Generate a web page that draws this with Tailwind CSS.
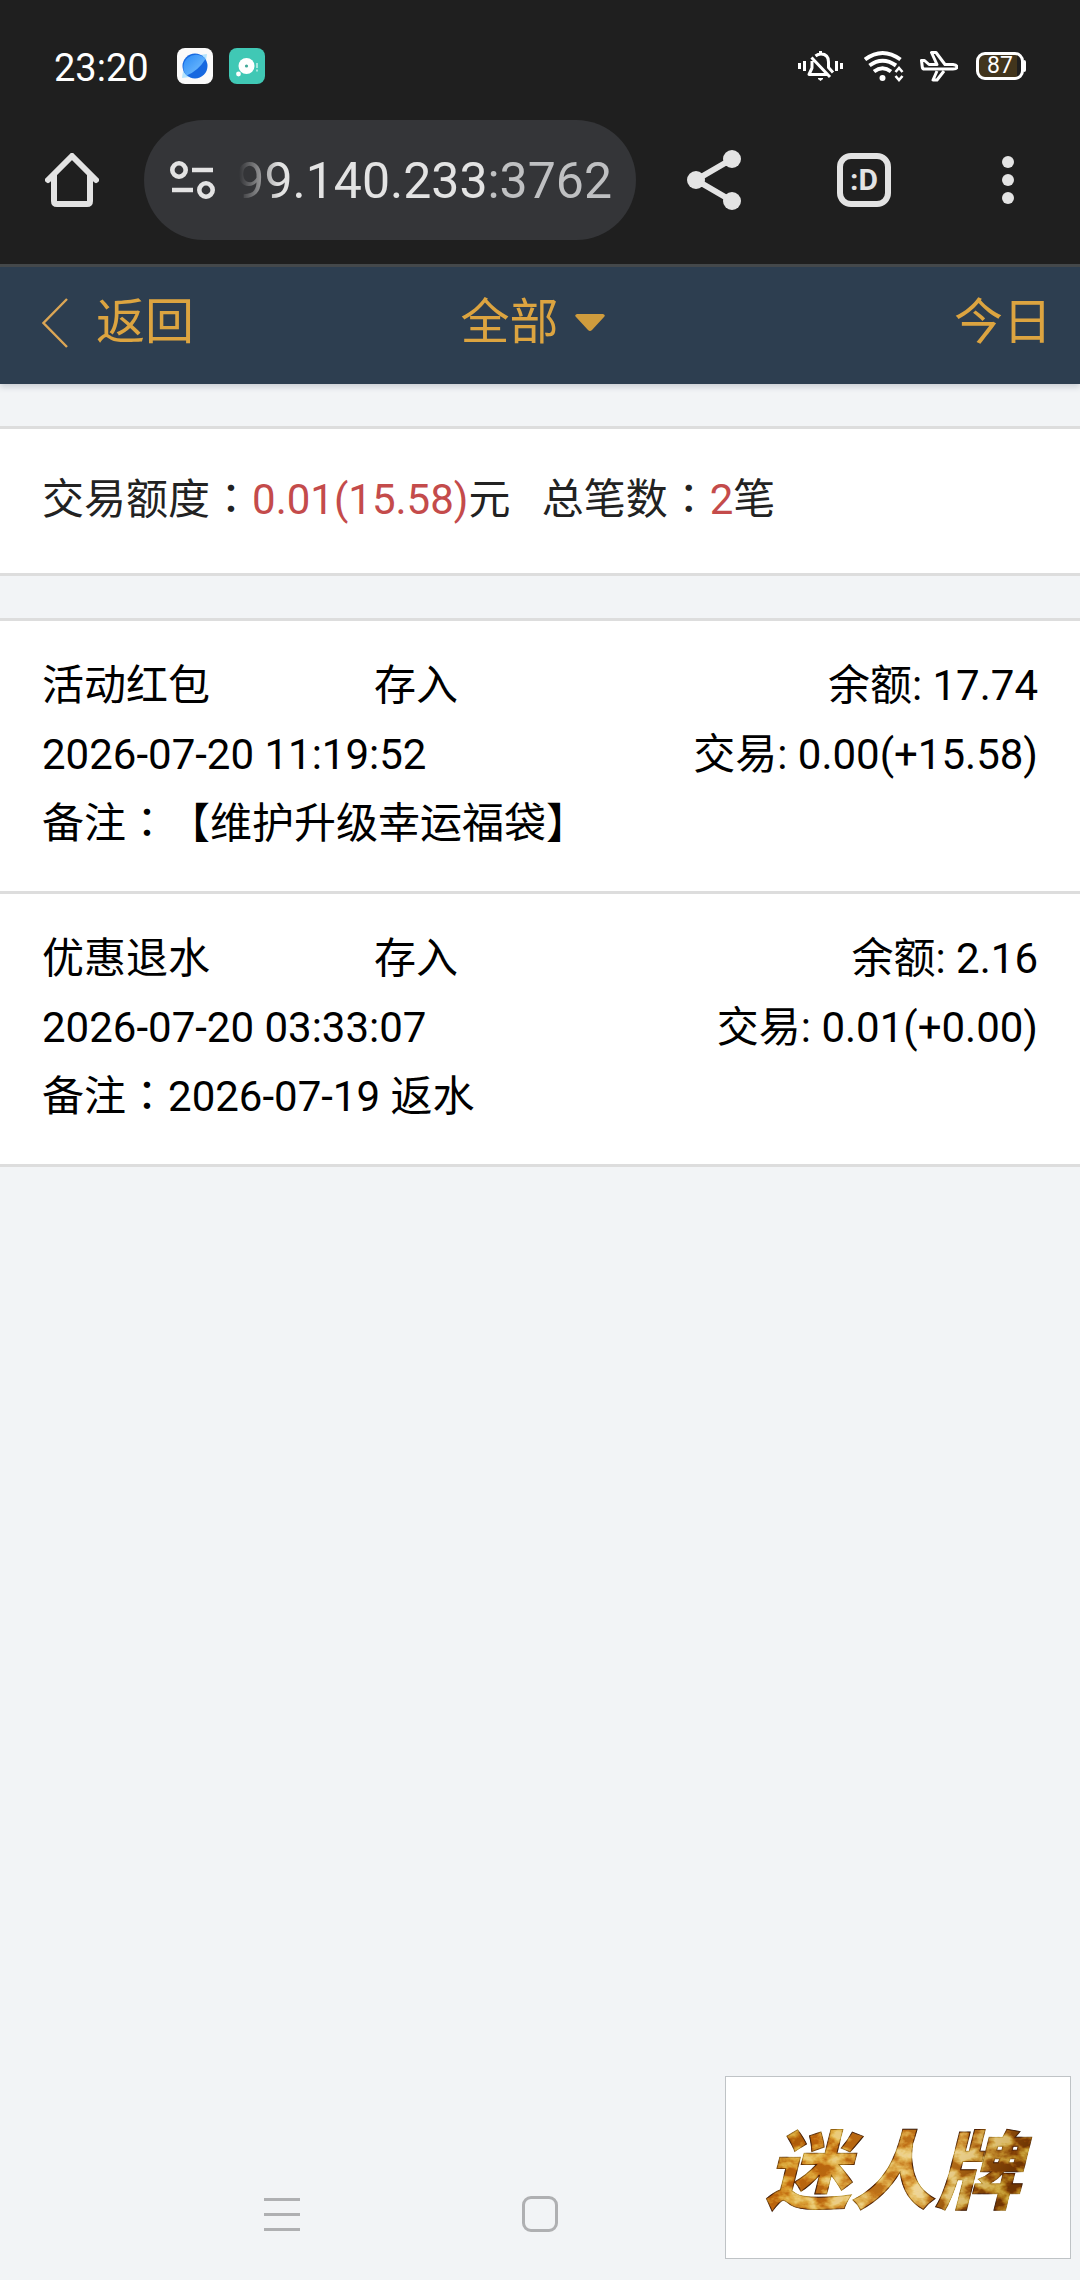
<!DOCTYPE html>
<html lang="zh-CN">
<head>
  <meta charset="UTF-8">
  <meta name="viewport" content="width=device-width, initial-scale=1.0">
  <title>交易记录</title>
  <script src="https://cdn.jsdelivr.net/npm/@tailwindcss/browser@4"></script>
</head>
<body class="flex flex-col min-h-screen bg-[#f2f4f6] text-black text-[42px] leading-[69px] font-['Roboto','Noto_Sans_CJK_SC',sans-serif]">

  <!-- Browser chrome -->
  <div class="bg-[#1f1f1f] text-[#e3e3e3] border-b-3 border-[#45494b]">
    <!-- Status bar -->
    <div class="flex items-center h-[120px] pt-3 px-[54px] text-white">
      <span class="pt-1 text-[38px] leading-[48px] mr-7">23:20</span>
      <svg class="size-9 mr-4" viewBox="0 0 36 36">
        <defs>
          <linearGradient id="planet" x1="0" y1="0" x2="1" y2="1">
            <stop offset="0" stop-color="#2a8af6"/>
            <stop offset="1" stop-color="#7cc4ff"/>
          </linearGradient>
        </defs>
        <rect width="36" height="36" rx="8" fill="#fafafa"/>
        <path d="M23 7l7-1-1 7zM6 23l-1 7 8-1z" fill="#b5e4fd"/>
        <circle cx="18" cy="18" r="12.5" fill="#1668e0"/>
        <path d="M28.5 11A12.5 12.5 0 1 0 9.5 27.5Q21 23 28.5 11z" fill="url(#planet)"/>
      </svg>
      <svg class="size-9" viewBox="0 0 36 36">
        <rect width="36" height="36" rx="8" fill="#40c8b5"/>
        <circle cx="17.5" cy="18" r="8" fill="#fff"/>
        <circle cx="17.5" cy="18" r="1.6" fill="#40a898"/>
        <circle cx="9.5" cy="26" r="2.4" fill="#fff"/>
        <path d="M28 15v5M28 21.5v2" stroke="#c5f0ea" stroke-width="1.5"/>
      </svg>
      <div class="ml-auto flex items-center">
        <svg class="w-[46px] h-8 mr-5" viewBox="0 0 46 32" fill="none" stroke="#fff" stroke-width="3">
          <path d="M1.5 13v6M6.5 11v10M38.5 11v10M43.5 13v6"/>
          <path d="M17.5 6Q20 4 23 4q7.5 0 7.5 8v5.5l4.5 5M14 11v7l-3 6.5h18M13.5 7.5L32 27M22.5 1v3" stroke-linejoin="round"/>
          <path d="M20 28.5h5l-2.5 2z" fill="#fff" stroke-width="1"/>
        </svg>
        <svg class="w-10 h-8 mr-4" viewBox="0 0 40 32" fill="none" stroke="#fff" stroke-width="4">
          <path d="M1 9.5Q18.500-3.500 36.500 9.500M5.500 15.500Q18.500 6 32 15.500M10 21.500Q18.500 15 27 21.500"/>
          <circle cx="18.5" cy="28" r="3" fill="#fff" stroke="none"/>
          <path d="M31.500 22l3.500-4 3.500 4M31.500 26l3.500 4 3.500-4" stroke-width="2.6"/>
        </svg>
        <svg class="w-[38px] h-8 mr-[18px]" viewBox="0 0 38 32" fill="none" stroke="#fff" stroke-width="3" stroke-linejoin="round">
          <path d="M1.500 10.500h3l4.500 4h8L11.500 2.500h4.500L25 14.500h8q4 .5 4 2.500t-4 2H4.500q-2 0-2.200-2z"/>
          <path d="M17 21L13 30h4L24 21"/>
        </svg>
        <span class="flex items-center">
          <span class="flex items-center justify-center w-12 h-7 rounded-[9px] border-3 border-white bg-linear-to-r from-[#42351c] from-90% to-[#1f1f1f] to-90% text-[23px] leading-[22px]">87</span>
          <span class="w-[2px] h-3 rounded-r-sm bg-white"></span>
        </span>
      </div>
    </div>
    <!-- Address bar -->
    <div class="flex items-center pl-[45px] pr-[66px] pb-6 leading-none">
      <button type="button" aria-label="主页" class="mr-[45px]">
        <svg class="size-[54px]" viewBox="0 0 54 54" fill="none" stroke="#e3e3e3" stroke-width="6" stroke-linecap="round" stroke-linejoin="round">
          <path d="M3 27L27 3l24 24M9 22v26q0 3 3 3h30q3 0 3-3V22"/>
        </svg>
      </button>
      <button type="button" aria-label="地址" class="flex-1 min-w-0 flex items-center h-[120px] rounded-full bg-[#343538] pl-[26px] pr-6">
        <svg class="w-[45px] h-10 mr-4 shrink-0" viewBox="0 0 45 40" fill="none" stroke="#e3e3e3" stroke-width="4.6">
          <circle cx="9" cy="10" r="6.7"/>
          <circle cx="36" cy="30" r="6.7"/>
          <path d="M22 10h21M2 30h21"/>
        </svg>
        <span class="flex-1 pt-0.5 text-right whitespace-nowrap text-[50px] leading-[60px] [mask-image:linear-gradient(to_right,transparent_8px,black_48px)]">99.140.233<span class="text-[#bfc0c2]">:3762</span></span>
      </button>
      <button type="button" aria-label="分享" class="ml-[51px]">
        <svg class="w-[54px] h-[60px]" viewBox="0 0 54 60" fill="#e3e3e3">
          <path d="M45 9L9 30l36 21" fill="none" stroke="#e3e3e3" stroke-width="6"/>
          <circle cx="9" cy="30" r="9"/>
          <circle cx="45" cy="9" r="9"/>
          <circle cx="45" cy="51" r="9"/>
        </svg>
      </button>
      <button type="button" aria-label="标签页" class="ml-24 size-[54px] rounded-[14px] border-6 border-[#e3e3e3] text-[30px] leading-[38px] font-bold">:D</button>
      <button type="button" aria-label="更多" class="ml-[111px]">
        <svg class="w-3 h-12" viewBox="0 0 12 48" fill="#e3e3e3">
          <circle cx="6" cy="6" r="6"/>
          <circle cx="6" cy="24" r="6"/>
          <circle cx="6" cy="42" r="6"/>
        </svg>
      </button>
    </div>
  </div>

  <!-- Page header -->
  <header class="grid grid-cols-3 items-center h-[117px] pl-[42px] pr-7 pb-1.5 bg-[#2d3e50] text-[#dca440] text-[49px] leading-[72px] shadow-[0_3px_6px_rgba(45,62,80,0.2)]">
    <a href="#" class="flex items-center gap-7">
      <svg class="w-[26px] h-[50px]" viewBox="0 0 26 50" fill="none" stroke="#dca655" stroke-width="2.4">
        <path d="M25 1L1.5 25 25 49"/>
      </svg>
      返回
    </a>
    <div class="flex items-center justify-center gap-4 pr-7">
      <select aria-label="交易类型" class="appearance-none">
        <option>全部</option>
      </select>
      <svg class="w-[30px] h-[17px]" viewBox="0 0 30 17" fill="#cf9c3d">
        <path d="M2 0h26q3 1 1 3L17 16q-2 2-4 0L1 3Q-1 1 2 0z"/>
      </svg>
    </div>
    <a href="#" class="justify-self-end">今日</a>
  </header>

  <main class="flex-1 pt-[42px] [text-spacing-trim:space-all]">
    <!-- Summary -->
    <p class="px-[42px] pt-9 pb-[39px] mb-[42px] bg-white border-y-3 border-[#ddd] text-[#222]">交易额度<span lang="zh-TW" class="leading-none font-['Noto_Sans_CJK_TC',sans-serif]">：</span><span class="text-[#c44b4b]">0.01(15.58)</span>元&nbsp;&nbsp;&nbsp;总笔数<span lang="zh-TW" class="leading-none font-['Noto_Sans_CJK_TC',sans-serif]">：</span><span class="text-[#c44b4b]">2</span>笔</p>

    <!-- Records -->
    <ul class="border-t-3 border-[#ddd] bg-white">
      <li class="px-[42px] pt-[30px] pb-[33px] border-b-3 border-[#ddd]">
        <div class="grid grid-cols-3">
          <span>活动红包</span>
          <span>存入</span>
          <span class="text-right">余额: 17.74</span>
        </div>
        <div class="flex justify-between">
          <span>2026-07-20 11:19:52</span>
          <span>交易: 0.00(+15.58)</span>
        </div>
        <p>备注<span lang="zh-TW" class="leading-none font-['Noto_Sans_CJK_TC',sans-serif]">：</span>【维护升级幸运福袋】</p>
      </li>
      <li class="px-[42px] pt-[30px] pb-[33px] border-b-3 border-[#ddd]">
        <div class="grid grid-cols-3">
          <span>优惠退水</span>
          <span>存入</span>
          <span class="text-right">余额: 2.16</span>
        </div>
        <div class="flex justify-between">
          <span>2026-07-20 03:33:07</span>
          <span>交易: 0.01(+0.00)</span>
        </div>
        <p>备注<span lang="zh-TW" class="leading-none font-['Noto_Sans_CJK_TC',sans-serif]">：</span>2026-07-19 返水</p>
      </li>
    </ul>
  </main>

  <!-- System navigation -->
  <nav class="grid grid-cols-3 justify-items-center w-full max-w-[774px] mx-auto pb-12">
    <button type="button" aria-label="菜单">
      <svg class="size-9" viewBox="0 0 36 36" stroke="#afb0b2" stroke-width="3">
        <path d="M0 3.5h36M0 18.5h36M0 33.5h36"/>
      </svg>
    </button>
    <button type="button" aria-label="主屏幕" class="size-9 rounded-[9px] border-3 border-[#afb0b2]"></button>
  </nav>

  <!-- Floating logo -->
  <a href="#" class="fixed right-[9px] bottom-[21px] w-[346px] h-[183px] bg-white border border-[#bfc3c6]">
    <svg class="w-full h-full" viewBox="0 0 344 181">
      <defs>
        <linearGradient id="gold" x1="0" y1="0" x2="1" y2="0.3">
          <stop offset="0" stop-color="#b8861f"/>
          <stop offset="0.25" stop-color="#d99f36"/>
          <stop offset="0.5" stop-color="#d8a548"/>
          <stop offset="0.72" stop-color="#e0b25a"/>
          <stop offset="1" stop-color="#a8751a"/>
        </linearGradient>
        <filter id="foil" x="-5%" y="-5%" width="110%" height="110%" color-interpolation-filters="sRGB">
          <feTurbulence type="fractalNoise" baseFrequency="0.05 0.07" numOctaves="4" seed="7" result="noise"/>
          <feColorMatrix in="noise" type="matrix" values="3 0 0 0 -1.05  3.2 0 0 0 -1.2  3 0 0 0 -1.15  0 0 0 0 1" result="grain"/>
          <feBlend in="grain" in2="SourceGraphic" mode="soft-light" result="mix"/>
          <feComposite in="mix" in2="SourceGraphic" operator="in"/>
        </filter>
      </defs>
      <text x="167" y="125" text-anchor="middle" font-family="'Noto Sans CJK SC', sans-serif" font-size="85" font-weight="900" font-style="italic" fill="url(#gold)" stroke="#8a5a10" stroke-width="1" filter="url(#foil)">迷人牌</text>
    </svg>
  </a>

</body>
</html>
